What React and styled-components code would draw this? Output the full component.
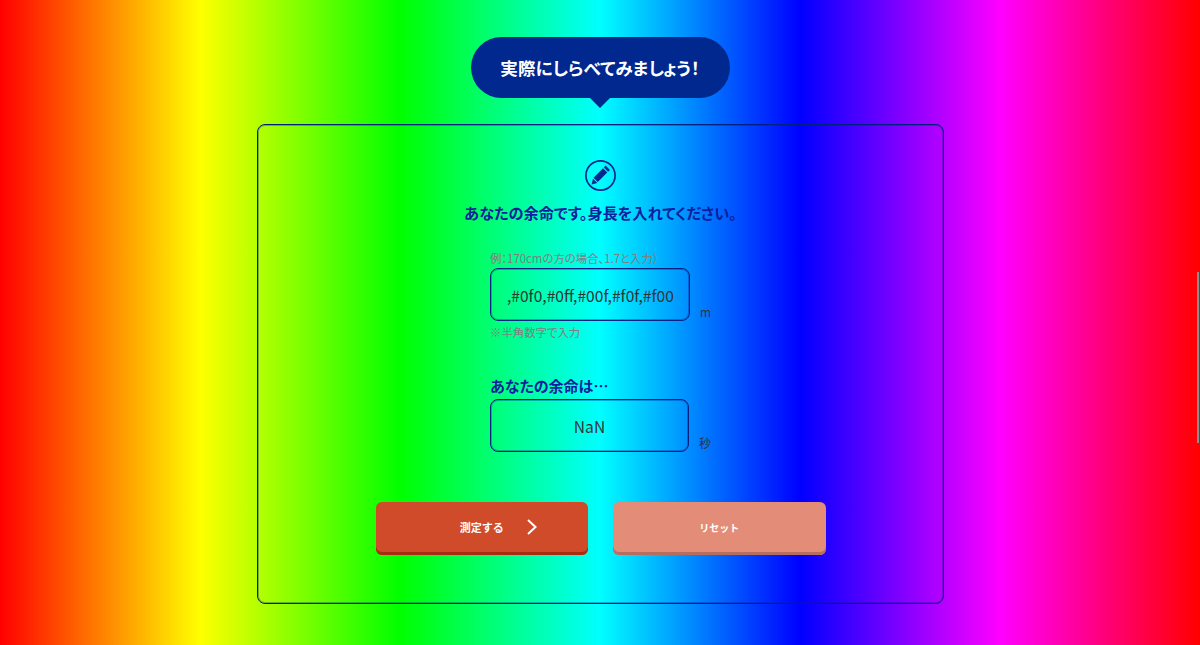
import React from 'react';
import styled, { createGlobalStyle } from 'styled-components';

const GlobalStyle = createGlobalStyle`
	html, body {
		margin: 0;
		padding: 0;
		height: 100%;
		overflow: hidden;
	}
	body {
		font-family: 'Noto Sans CJK JP', 'Noto Sans', sans-serif;
		font-feature-settings: 'palt';
		color: #333;
	}
`;

const App = () => {
	return (
		<Page>
			<GlobalStyle />
			<Bubble>実際にしらべてみましょう！</Bubble>
			<Card>
				<PencilBadge>
					<svg width="31" height="31" viewBox="0 0 31 31" fill="none">
						<circle cx="15.5" cy="15.5" r="14.6" stroke="#00288f" strokeWidth="1.7" />
						<path d="M20.6 5.6l4.3 4.3-1.8 1.8-4.3-4.3zM18 8.2l4.3 4.3-9.5 9.5-4.3-4.3zM8 18.7l4.3 4.3-5.7 1.4z" fill="#00288f" />
					</svg>
				</PencilBadge>
				<Title>あなたの余命です。身長を入れてください。</Title>

				<Form>
					<Hint>例：170cmの方の場合、1.7と入力）</Hint>
					<FieldRow>
						<ValueBox>,#0f0,#0ff,#00f,#f0f,#f00</ValueBox>
						<Unit>m</Unit>
					</FieldRow>
					<Note>※半角数字で入力</Note>

					<ResultLabel>あなたの余命は…</ResultLabel>
					<FieldRow>
						<ValueBox $center>NaN</ValueBox>
						<Unit>秒</Unit>
					</FieldRow>
				</Form>

				<Buttons>
					<ActionButton>
						測定する
						<Chevron width="12" height="18" viewBox="0 0 12 18" fill="none">
							<path d="M2 2l7.5 7L2 16" stroke="#fff" strokeWidth="2" />
						</Chevron>
					</ActionButton>
					<ActionButton $muted>リセット</ActionButton>
				</Buttons>
			</Card>
			<ScrollThumb />
		</Page>
	);
};

const Page = styled.div`
	position: relative;
	box-sizing: border-box;
	height: 645px;
	padding-top: 37px;
	display: flex;
	flex-direction: column;
	align-items: center;
	overflow: hidden;
	background: linear-gradient(to right, #f00, #ff0, #0f0, #0ff, #00f, #f0f, #f00);
`;

const Bubble = styled.div`
	position: relative;
	width: 259px;
	height: 61px;
	margin-bottom: 26px;
	display: flex;
	align-items: center;
	justify-content: center;
	border-radius: 31px;
	background: #00288f;
	color: #fff;
	font-size: 17.6px;
	font-weight: 700;

	&::after {
		content: '';
		position: absolute;
		left: 50%;
		bottom: -10px;
		margin-left: -10px;
		border-style: solid;
		border-width: 10px 10px 0;
		border-color: #00288f transparent transparent;
	}
`;

const Card = styled.section`
	box-sizing: border-box;
	width: 687px;
	height: 480px;
	margin-left: 1px;
	padding-top: 35px;
	display: flex;
	flex-direction: column;
	align-items: center;
	border: 1px solid #00207f;
	border-radius: 8px;
	box-shadow: inset 0 0 0 1px rgba(0, 30, 143, 0.35);
`;

const PencilBadge = styled.div`
	width: 31px;
	height: 31px;
	margin-bottom: 9px;
`;

const Title = styled.h2`
	margin: 0;
	font-size: 15.2px;
	line-height: 24px;
	font-weight: 700;
	color: #0d1f9c;
`;

const Form = styled.div`
	width: 221px;
	margin-top: 25px;
	display: flex;
	flex-direction: column;
`;

const Hint = styled.p`
	margin: 0 0 1px;
	font-size: 11.4px;
	line-height: 18px;
	color: #7f7f7f;
`;

const Note = styled(Hint)`
	margin: 2px 0 0;
`;

const FieldRow = styled.div`
	display: flex;
	align-items: flex-end;
	gap: 10px;
`;

const ValueBox = styled.div`
	box-sizing: border-box;
	width: 200px;
	height: 53px;
	display: flex;
	align-items: center;
	justify-content: ${(p) => (p.$center ? 'center' : 'flex-end')};
	padding: 0 15px;
	border: 1px solid #00207f;
	border-radius: 8px;
	box-shadow: inset 0 0 0 1px rgba(0, 30, 143, 0.35);
	font-size: 15.6px;
	white-space: nowrap;
`;

const Unit = styled.span`
	font-size: 12px;
	line-height: 18px;
`;

const ResultLabel = styled.h3`
	margin: 33px 0 1px;
	font-size: 15px;
	line-height: 24px;
	font-weight: 700;
	color: #0d1f9c;
`;

const Buttons = styled.div`
	margin-top: 50px;
	display: flex;
	gap: 25px;
`;

const ActionButton = styled.button`
	position: relative;
	box-sizing: border-box;
	width: 212.5px;
	height: 53px;
	padding: 0 0 3px;
	border: 0;
	border-radius: 6px;
	background: ${(p) => (p.$muted ? '#e38c78' : '#d04b2a')};
	box-shadow: inset 0 -3px 0 ${(p) => (p.$muted ? '#b56e60' : '#a62d10')};
	color: #fff;
	font-family: inherit;
	font-size: ${(p) => (p.$muted ? '10px' : '11px')};
	font-weight: 700;
`;

const Chevron = styled.svg`
	position: absolute;
	top: 16px;
	right: 50px;
`;

const ScrollThumb = styled.div`
	position: absolute;
	top: 272px;
	right: 1px;
	width: 2px;
	height: 171px;
	background: #8f8f8f;
`;

export default App;
